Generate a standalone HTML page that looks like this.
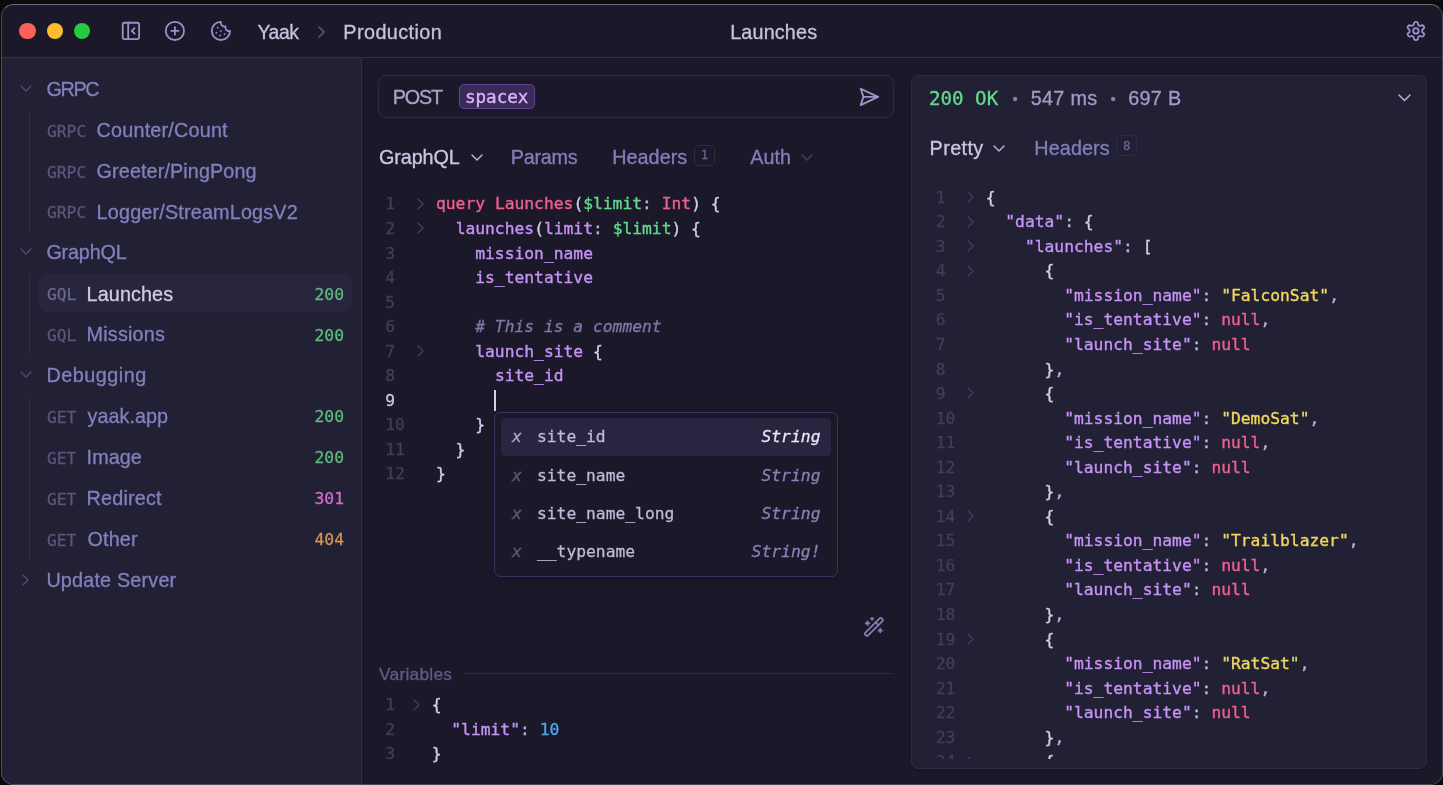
<!DOCTYPE html>
<html lang="en"><head><meta charset="utf-8"><title>Yaak – Launches</title>
<style>
*{box-sizing:border-box;margin:0;padding:0}
html,body{width:1443px;height:785px;overflow:hidden;background:#0b0b0c}
body{position:relative;font-family:"Liberation Sans",sans-serif;font-size:19.1px;color:#c8c4dc;-webkit-font-smoothing:antialiased}
.abs{position:absolute}
#win{will-change:transform;position:absolute;left:0;top:4px;width:1443px;height:781px;background:#1b1929;overflow:hidden}
#winb{position:absolute;left:.5px;top:4px;width:1442.2px;height:780.5px;border-radius:12.5px;border:1px solid rgba(255,255,255,.2);border-top-color:rgba(255,255,255,.36);box-shadow:0 0 0 30px #0b0b0c;pointer-events:none;z-index:50}
#tbar{position:absolute;left:0;top:0;width:1443px;height:54px;border-bottom:1px solid #322f4c;background:#1b1929}
.tl{position:absolute;top:18.8px;width:16.6px;height:16.6px;border-radius:50%}
svg.ic{position:absolute;fill:none;stroke-width:2;stroke-linecap:round;stroke-linejoin:round}
.t{position:absolute;white-space:pre;height:0;line-height:0;-webkit-text-stroke:0.32px currentColor}
.m{font-family:'DejaVu Sans Mono', 'Liberation Mono', monospace;-webkit-text-stroke-width:0.28px}
#side{position:absolute;left:0;top:54px;width:362px;height:727px;background:#222035;border-right:1px solid #322f4c}
.code{position:absolute;font-family:'DejaVu Sans Mono', 'Liberation Mono', monospace;font-size:16.31px;line-height:24.545px;white-space:pre;color:#d3d0e6;-webkit-text-stroke:0.35px currentColor}
.ln{position:absolute;font-family:'DejaVu Sans Mono', 'Liberation Mono', monospace;font-size:16.31px;line-height:24.545px;white-space:pre;color:#403d5e;-webkit-text-stroke:0.3px currentColor}
.k{color:#f0608f}.v{color:#62d98a}.p{color:#c693f6}.s{color:#f0d85c}.c{color:#7b77a6;font-style:italic}.num{color:#4aa8e8}.d{color:#bab6d4}
</style></head>
<body>
<div id="win">
<div id="tbar"></div>
<div class="tl" style="left:19.4px;background:#fe5f57"></div>
<div class="tl" style="left:46.6px;background:#febc2e"></div>
<div class="tl" style="left:73.9px;background:#28c840"></div>
<svg class="ic" style="left:120.29px;top:16.19px;stroke:#9892c8;stroke-width:2" width="21.82" height="21.82" viewBox="0 0 24 24" ><rect width="18" height="18" x="3" y="3" rx="2"/><path d="M9 3v18"/><path d="m16 15-3-3 3-3"/></svg>
<svg class="ic" style="left:164.09px;top:16.19px;stroke:#9892c8;stroke-width:2" width="21.82" height="21.82" viewBox="0 0 24 24" ><circle cx="12" cy="12" r="10"/><path d="M8 12h8"/><path d="M12 8v8"/></svg>
<svg class="ic" style="left:210.49px;top:16.19px;stroke:#9892c8;stroke-width:2" width="21.82" height="21.82" viewBox="0 0 24 24" ><path d="M12 2a10 10 0 1 0 10 10 4 4 0 0 1-5-5 4 4 0 0 1-5-5"/><path d="M8.5 8.5v.01"/><path d="M16 15.5v.01"/><path d="M12 12v.01"/><path d="M11 17v.01"/><path d="M7 14v.01"/></svg>
<div class="t" style="left:257.5px;top:27.70px;font-size:19.4px;color:#c6c1de;letter-spacing:-0.4px;">Yaak</div>
<svg class="ic" style="left:316.60px;top:20.80px;stroke:#5c587f;stroke-width:1.5" width="9" height="14" viewBox="0 0 9 14"><path d="M2 2 L7 7.0 L2 12"/></svg>
<div class="t" style="left:343.3px;top:27.70px;font-size:19.8px;color:#c6c1de;letter-spacing:0.437px;">Production</div>
<div class="t" style="left:730.2px;top:27.70px;font-size:19.8px;color:#c6c1de;letter-spacing:0.157px;">Launches</div>
<svg class="ic" style="left:1405.29px;top:16.09px;stroke:#9892c8;stroke-width:2" width="21.82" height="21.82" viewBox="0 0 24 24" ><path d="M12.22 2h-.44a2 2 0 0 0-2 2v.18a2 2 0 0 1-1 1.73l-.43.25a2 2 0 0 1-2 0l-.15-.08a2 2 0 0 0-2.73.73l-.22.38a2 2 0 0 0 .73 2.73l.15.1a2 2 0 0 1 1 1.72v.51a2 2 0 0 1-1 1.74l-.15.09a2 2 0 0 0-.73 2.73l.22.38a2 2 0 0 0 2.73.73l.15-.08a2 2 0 0 1 2 0l.43.25a2 2 0 0 1 1 1.73V20a2 2 0 0 0 2 2h.44a2 2 0 0 0 2-2v-.18a2 2 0 0 1 1-1.73l.43-.25a2 2 0 0 1 2 0l.15.08a2 2 0 0 0 2.73-.73l.22-.39a2 2 0 0 0-.73-2.73l-.15-.08a2 2 0 0 1-1-1.74v-.5a2 2 0 0 1 1-1.74l.15-.09a2 2 0 0 0 .73-2.73l-.22-.38a2 2 0 0 0-2.73-.73l-.15.08a2 2 0 0 1-2 0l-.43-.25a2 2 0 0 1-1-1.73V4a2 2 0 0 0-2-2z"/><circle cx="12" cy="12" r="3"/></svg>
<div id="side"></div>
<svg class="ic" style="left:18.90px;top:79.80px;stroke:#4d4972;stroke-width:1.5" width="14" height="9" viewBox="0 0 14 9"><path d="M2 2 L7.0 7 L12 2"/></svg>
<div class="t" style="left:46.6px;top:84.60px;font-size:19.8px;color:#847fbd;letter-spacing:-1.389px;">GRPC</div>
<div class="t m" style="left:47px;top:127.61px;font-size:16.31px;color:#5a567c;">GRPC</div>
<div class="t" style="left:96.6px;top:125.91px;font-size:19.8px;color:#847fbd;letter-spacing:0.195px;">Counter/Count</div>
<div class="t m" style="left:47px;top:168.52px;font-size:16.31px;color:#5a567c;">GRPC</div>
<div class="t" style="left:96.6px;top:166.82px;font-size:19.8px;color:#847fbd;letter-spacing:0.104px;">Greeter/PingPong</div>
<div class="t m" style="left:47px;top:209.43px;font-size:16.31px;color:#5a567c;">GRPC</div>
<div class="t" style="left:96.6px;top:207.73px;font-size:19.8px;color:#847fbd;letter-spacing:0.176px;">Logger/StreamLogsV2</div>
<svg class="ic" style="left:18.90px;top:243.44px;stroke:#4d4972;stroke-width:1.5" width="14" height="9" viewBox="0 0 14 9"><path d="M2 2 L7.0 7 L12 2"/></svg>
<div class="t" style="left:46.4px;top:248.24px;font-size:19.8px;color:#847fbd;letter-spacing:-0.177px;">GraphQL</div>
<div class="abs" style="left:39px;top:269.55px;width:313px;height:38.2px;border-radius:8px;background:#28263e"></div>
<div class="t m" style="left:47px;top:291.25px;font-size:16.31px;color:#6b678e;">GQL</div>
<div class="t" style="left:86.6px;top:289.55px;font-size:19.8px;color:#cfcbe6;letter-spacing:0.1px;">Launches</div>
<div class="t m" style="left:314.5px;top:290.65px;font-size:16.36px;color:#5cbc7a;">200</div>
<div class="t m" style="left:47px;top:332.16px;font-size:16.31px;color:#5a567c;">GQL</div>
<div class="t" style="left:86.6px;top:330.46px;font-size:19.8px;color:#847fbd;letter-spacing:0.193px;">Missions</div>
<div class="t m" style="left:314.5px;top:331.56px;font-size:16.36px;color:#5cbc7a;">200</div>
<svg class="ic" style="left:18.90px;top:366.17px;stroke:#4d4972;stroke-width:1.5" width="14" height="9" viewBox="0 0 14 9"><path d="M2 2 L7.0 7 L12 2"/></svg>
<div class="t" style="left:46.4px;top:370.97px;font-size:19.8px;color:#847fbd;letter-spacing:0.514px;">Debugging</div>
<div class="t m" style="left:47px;top:413.98px;font-size:16.31px;color:#5a567c;">GET</div>
<div class="t" style="left:87.6px;top:412.28px;font-size:19.8px;color:#847fbd;letter-spacing:0.017px;">yaak.app</div>
<div class="t m" style="left:314.5px;top:413.38px;font-size:16.36px;color:#5cbc7a;">200</div>
<div class="t m" style="left:47px;top:454.89px;font-size:16.31px;color:#5a567c;">GET</div>
<div class="t" style="left:86.6px;top:453.19px;font-size:19.8px;color:#847fbd;letter-spacing:0.056px;">Image</div>
<div class="t m" style="left:314.5px;top:454.29px;font-size:16.36px;color:#5cbc7a;">200</div>
<div class="t m" style="left:47px;top:495.80px;font-size:16.31px;color:#5a567c;">GET</div>
<div class="t" style="left:86.6px;top:494.10px;font-size:19.8px;color:#847fbd;letter-spacing:0.177px;">Redirect</div>
<div class="t m" style="left:314.5px;top:495.20px;font-size:16.36px;color:#d36fcc;">301</div>
<div class="t m" style="left:47px;top:536.71px;font-size:16.31px;color:#5a567c;">GET</div>
<div class="t" style="left:87.6px;top:535.01px;font-size:19.8px;color:#847fbd;letter-spacing:0.129px;">Other</div>
<div class="t m" style="left:314.5px;top:536.11px;font-size:16.36px;color:#d9964e;">404</div>
<svg class="ic" style="left:21.40px;top:569.12px;stroke:#4d4972;stroke-width:1.5" width="9" height="14" viewBox="0 0 9 14"><path d="M2 2 L7 7.0 L2 12"/></svg>
<div class="t" style="left:46.4px;top:575.52px;font-size:19.8px;color:#847fbd;letter-spacing:0.187px;">Update Server</div>
<div class="abs" style="left:29px;top:106px;width:1px;height:122.6px;background:#2f2c49"></div>
<div class="abs" style="left:29px;top:269.7px;width:1px;height:81.80000000000001px;background:#2f2c49"></div>
<div class="abs" style="left:29px;top:392.5px;width:1px;height:163.5px;background:#2f2c49"></div>
<div class="abs" style="left:378px;top:71.4px;width:516px;height:42.2px;border:1px solid #2e2b47;border-radius:9px"></div>
<div class="t" style="left:392.7px;top:92.70px;font-size:19.8px;color:#a9a5c8;letter-spacing:-1.125px;">POST</div>
<div class="abs" style="left:459px;top:80px;width:75.7px;height:25.2px;border:1px solid #5d4392;background:#3a2a5a;border-radius:5px"></div>
<div class="t m" style="left:464.9px;top:92.80px;font-size:17.6px;color:#d9b4fa;-webkit-text-stroke-width:0.4px;">spacex</div>
<svg class="ic" style="left:858.30px;top:81.80px;stroke:#9d98cc;stroke-width:2" width="21.82" height="21.82" viewBox="0 0 24 24" ><path d="m3 3 3 9-3 9 19-9Z"/><path d="M6 12h16"/></svg>
<div class="t" style="left:379px;top:153.40px;font-size:19.8px;color:#cbc6e4;letter-spacing:-0.094px;">GraphQL</div>
<svg class="ic" style="left:469.60px;top:149.40px;stroke:#b5b1d0;stroke-width:1.5" width="14" height="9" viewBox="0 0 14 9"><path d="M2 2 L7.0 7 L12 2"/></svg>
<div class="t" style="left:510.7px;top:153.40px;font-size:19.8px;color:#837eba;letter-spacing:-0.232px;">Params</div>
<div class="t" style="left:612.2px;top:153.40px;font-size:19.8px;color:#837eba;letter-spacing:0.037px;">Headers</div>
<div class="abs" style="left:694.3px;top:140.6px;width:20.6px;height:21px;border:1px solid #2e2b47;border-radius:5px"></div>
<div class="t m" style="left:700.7px;top:151.00px;font-size:12.4px;color:#6a6694;">1</div>
<div class="t" style="left:750.2px;top:153.40px;font-size:19.8px;color:#837eba;letter-spacing:0.07px;">Auth</div>
<svg class="ic" style="left:799.60px;top:149.40px;stroke:#423f60;stroke-width:1.5" width="14" height="9" viewBox="0 0 14 9"><path d="M2 2 L7.0 7 L12 2"/></svg>
<div class="ln" style="left:385.3px;top:188.43px">1
2
3
4
5
6
7
8
<span style="color:#cdc9e2">9</span>
10
11
12</div>
<div class="code" style="left:436px;top:188.43px"><span class="k">query</span> <span class="k">Launches</span>(<span class="v">$limit</span><span class="d">:</span> <span class="k">Int</span>) {
  <span class="p">launches</span>(<span class="p">limit</span><span class="d">:</span> <span class="v">$limit</span>) {
    <span class="p">mission_name</span>
    <span class="p">is_tentative</span>

    <span class="c"># This is a comment</span>
    <span class="p">launch_site</span> {
      <span class="p">site_id</span>
      
    }
  }
}</div>
<svg class="ic" style="left:415.70px;top:192.80px;stroke:#403d5e;stroke-width:1.4" width="9" height="14" viewBox="0 0 9 14"><path d="M2 2 L7 7.0 L2 12"/></svg>
<svg class="ic" style="left:415.70px;top:217.34px;stroke:#403d5e;stroke-width:1.4" width="9" height="14" viewBox="0 0 9 14"><path d="M2 2 L7 7.0 L2 12"/></svg>
<svg class="ic" style="left:415.70px;top:340.07px;stroke:#403d5e;stroke-width:1.4" width="9" height="14" viewBox="0 0 9 14"><path d="M2 2 L7 7.0 L2 12"/></svg>
<div class="abs" style="left:494.2px;top:386px;width:1.6px;height:21px;background:#d6d3e8"></div>
<div class="abs" style="left:494.2px;top:408.2px;width:343.8px;height:165.2px;border:1px solid #37345a;border-radius:6px;background:#1b1929;box-shadow:0 4px 12px rgba(0,0,0,.18)"></div>
<div class="abs" style="left:501px;top:414.4px;width:330.4px;height:38px;border-radius:4px;background:#272540"></div>
<div class="t m" style="left:512px;top:433.40px;font-size:16.36px;color:#a9a5c8;font-style:italic;">x</div>
<div class="t m" style="left:537px;top:433.40px;font-size:16.31px;color:#bfbbd8;">site_id</div>
<div class="t m" style="left:761.3919999999999px;top:433.40px;font-size:16.36px;color:#e9e6f5;font-style:italic;">String</div>
<div class="t m" style="left:512px;top:471.58px;font-size:16.36px;color:#5c587f;font-style:italic;">x</div>
<div class="t m" style="left:537px;top:471.58px;font-size:16.31px;color:#bfbbd8;">site_name</div>
<div class="t m" style="left:761.3919999999999px;top:471.58px;font-size:16.36px;color:#8782b8;font-style:italic;">String</div>
<div class="t m" style="left:512px;top:509.76px;font-size:16.36px;color:#5c587f;font-style:italic;">x</div>
<div class="t m" style="left:537px;top:509.76px;font-size:16.31px;color:#bfbbd8;">site_name_long</div>
<div class="t m" style="left:761.3919999999999px;top:509.76px;font-size:16.36px;color:#8782b8;font-style:italic;">String</div>
<div class="t m" style="left:512px;top:547.94px;font-size:16.36px;color:#5c587f;font-style:italic;">x</div>
<div class="t m" style="left:537px;top:547.94px;font-size:16.31px;color:#bfbbd8;">__typename</div>
<div class="t m" style="left:751.574px;top:547.94px;font-size:16.36px;color:#8782b8;font-style:italic;">String!</div>
<div class="abs" style="left:851px;top:605px;width:44px;height:40px;border-radius:8px;background:#1b1929;box-shadow:0 1px 3px rgba(0,0,0,.1)"></div>
<svg class="ic" style="left:862.89px;top:611.99px;stroke:#837eb0;stroke-width:2" width="21.82" height="21.82" viewBox="0 0 24 24" ><path d="m21.64 3.64-1.28-1.28a1.21 1.21 0 0 0-1.72 0L2.36 18.64a1.21 1.21 0 0 0 0 1.72l1.28 1.28a1.2 1.2 0 0 0 1.72 0L21.64 5.36a1.2 1.2 0 0 0 0-1.72"/><path d="m14 7 3 3"/><path d="M5 6v4"/><path d="M19 14v4"/><path d="M10 2v2"/><path d="M7 8H3"/><path d="M21 16h-4"/><path d="M11 3H9"/></svg>
<div class="t" style="left:379.1px;top:669.80px;font-size:17.325px;color:#5f5b88;letter-spacing:0.246px;">Variables</div>
<div class="abs" style="left:463.5px;top:669.1px;width:430.5px;height:1px;background:#2c2945"></div>
<div class="ln" style="left:385.3px;top:689.23px">1
2
3</div>
<div class="code" style="left:431.7px;top:689.23px">{
  <span class="p">"limit"</span><span class="d">:</span> <span class="num">10</span>
}</div>
<svg class="ic" style="left:412.20px;top:693.60px;stroke:#403d5e;stroke-width:1.4" width="9" height="14" viewBox="0 0 9 14"><path d="M2 2 L7 7.0 L2 12"/></svg>
<div class="abs" style="left:911px;top:71.4px;width:516px;height:693.5px;border:1px solid #2e2b47;border-radius:7.5px;background:#222035;box-shadow:0 1px 3px rgba(0,0,0,.2)"></div>
<div class="t m" style="left:928.9px;top:94.70px;font-size:19.2px;color:#62dc8b;">200 OK</div>
<div class="t" style="left:1012.4px;top:94.90px;font-size:15px;color:#8782b8;">•</div>
<div class="t" style="left:1030.7px;top:94.40px;font-size:19.8px;color:#a19cc6;letter-spacing:0.304px;">547 ms</div>
<div class="t" style="left:1110.5px;top:94.90px;font-size:15px;color:#8782b8;">•</div>
<div class="t" style="left:1128.3px;top:94.40px;font-size:19.8px;color:#a19cc6;letter-spacing:0.275px;">697 B</div>
<svg class="ic" style="left:1396.70px;top:89.15px;stroke:#b5b1d0;stroke-width:1.5" width="15" height="9.5" viewBox="0 0 15 9.5"><path d="M2 2 L7.5 7.5 L13 2"/></svg>
<div class="t" style="left:929.6px;top:143.80px;font-size:19.8px;color:#cbc6e4;letter-spacing:0.385px;">Pretty</div>
<svg class="ic" style="left:991.80px;top:139.90px;stroke:#b5b1d0;stroke-width:1.5" width="14" height="9" viewBox="0 0 14 9"><path d="M2 2 L7.0 7 L12 2"/></svg>
<div class="t" style="left:1034.3px;top:143.80px;font-size:19.8px;color:#837eba;letter-spacing:0.104px;">Headers</div>
<div class="abs" style="left:1116.3px;top:131.1px;width:20.8px;height:21.2px;border:1px solid #2e2b47;border-radius:5px"></div>
<div class="t m" style="left:1123px;top:141.60px;font-size:12.4px;color:#6a6694;">8</div>
<div class="abs" style="left:913px;top:176px;width:512px;height:579.2px;overflow:hidden">
<div class="ln" style="left:22.700000000000045px;top:5.73px">1
2
3
4
5
6
7
8
9
10
11
12
13
14
15
16
17
18
19
20
21
22
23
24</div>
<div class="code" style="left:72.70000000000005px;top:5.73px">{
  <span class="p">"data"</span><span class="d">:</span> {
    <span class="p">"launches"</span><span class="d">:</span> [
      {
        <span class="p">"mission_name"</span><span class="d">:</span> <span class="s">"FalconSat"</span><span class="d">,</span>
        <span class="p">"is_tentative"</span><span class="d">:</span> <span class="k">null</span><span class="d">,</span>
        <span class="p">"launch_site"</span><span class="d">:</span> <span class="k">null</span>
      }<span class="d">,</span>
      {
        <span class="p">"mission_name"</span><span class="d">:</span> <span class="s">"DemoSat"</span><span class="d">,</span>
        <span class="p">"is_tentative"</span><span class="d">:</span> <span class="k">null</span><span class="d">,</span>
        <span class="p">"launch_site"</span><span class="d">:</span> <span class="k">null</span>
      }<span class="d">,</span>
      {
        <span class="p">"mission_name"</span><span class="d">:</span> <span class="s">"Trailblazer"</span><span class="d">,</span>
        <span class="p">"is_tentative"</span><span class="d">:</span> <span class="k">null</span><span class="d">,</span>
        <span class="p">"launch_site"</span><span class="d">:</span> <span class="k">null</span>
      }<span class="d">,</span>
      {
        <span class="p">"mission_name"</span><span class="d">:</span> <span class="s">"RatSat"</span><span class="d">,</span>
        <span class="p">"is_tentative"</span><span class="d">:</span> <span class="k">null</span><span class="d">,</span>
        <span class="p">"launch_site"</span><span class="d">:</span> <span class="k">null</span>
      }<span class="d">,</span>
      {</div>
<svg class="ic" style="left:52.80px;top:10.10px;stroke:#403d5e;stroke-width:1.4" width="9" height="14" viewBox="0 0 9 14"><path d="M2 2 L7 7.0 L2 12"/></svg>
<svg class="ic" style="left:52.80px;top:34.65px;stroke:#403d5e;stroke-width:1.4" width="9" height="14" viewBox="0 0 9 14"><path d="M2 2 L7 7.0 L2 12"/></svg>
<svg class="ic" style="left:52.80px;top:59.19px;stroke:#403d5e;stroke-width:1.4" width="9" height="14" viewBox="0 0 9 14"><path d="M2 2 L7 7.0 L2 12"/></svg>
<svg class="ic" style="left:52.80px;top:83.73px;stroke:#403d5e;stroke-width:1.4" width="9" height="14" viewBox="0 0 9 14"><path d="M2 2 L7 7.0 L2 12"/></svg>
<svg class="ic" style="left:52.80px;top:206.46px;stroke:#403d5e;stroke-width:1.4" width="9" height="14" viewBox="0 0 9 14"><path d="M2 2 L7 7.0 L2 12"/></svg>
<svg class="ic" style="left:52.80px;top:329.19px;stroke:#403d5e;stroke-width:1.4" width="9" height="14" viewBox="0 0 9 14"><path d="M2 2 L7 7.0 L2 12"/></svg>
<svg class="ic" style="left:52.80px;top:451.91px;stroke:#403d5e;stroke-width:1.4" width="9" height="14" viewBox="0 0 9 14"><path d="M2 2 L7 7.0 L2 12"/></svg>
<svg class="ic" style="left:52.80px;top:574.64px;stroke:#403d5e;stroke-width:1.4" width="9" height="14" viewBox="0 0 9 14"><path d="M2 2 L7 7.0 L2 12"/></svg>
</div>
</div>
<div id="winb"></div>
</body></html>
